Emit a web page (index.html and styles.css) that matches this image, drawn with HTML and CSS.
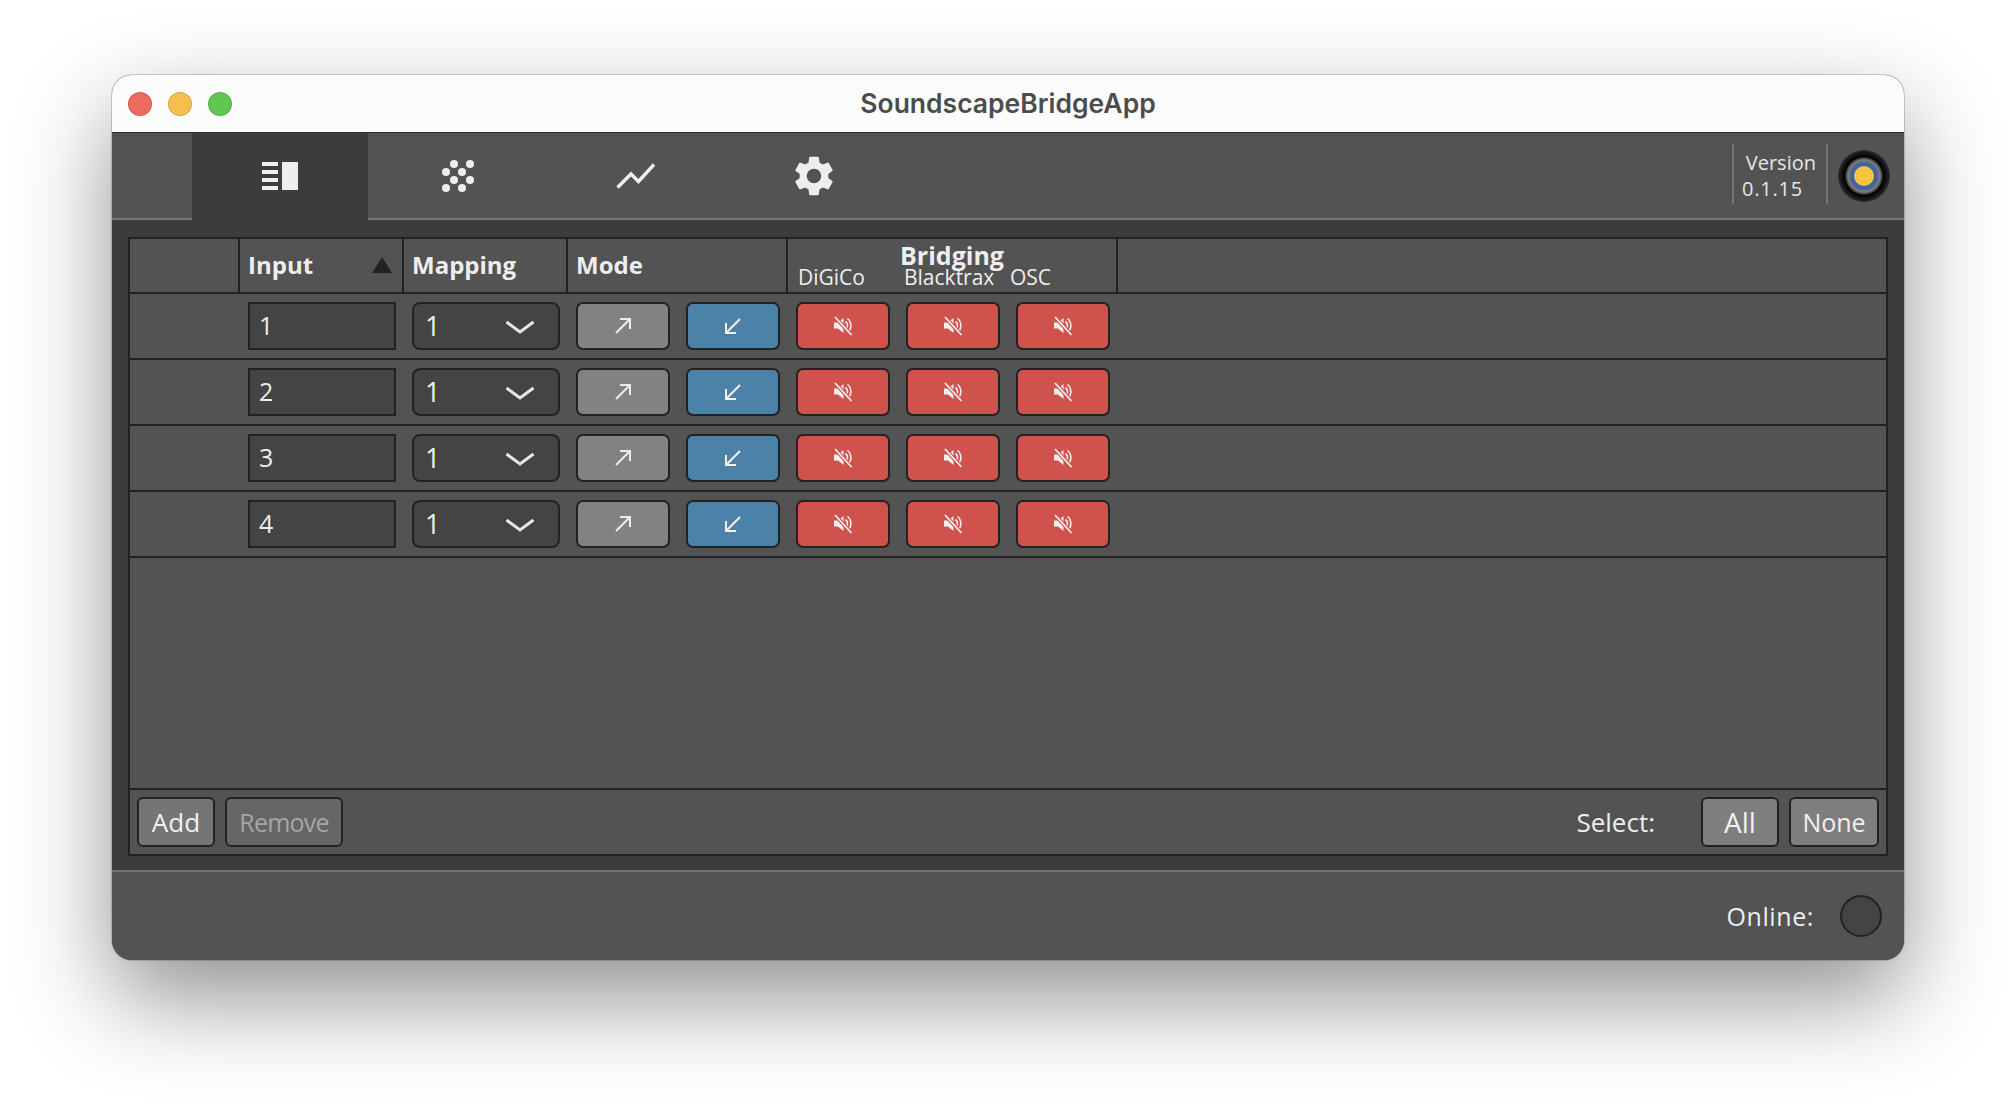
FILE: index.html
```html
<!DOCTYPE html>
<html lang="en">
<head>
<meta charset="utf-8">
<title>SoundscapeBridgeApp</title>
<link rel="stylesheet" href="styles.css">
</head>
<body>
<svg class="defs" width="0" height="0" aria-hidden="true">
  <defs>
    <symbol id="mute" viewBox="0 0 20 20">
      <path d="M1 6.5h4L10.5 2v15L5 12.5H1z" fill="#f0f0f0"/>
      <path d="M12.5 5.5a5 5 0 0 1 0 8M14.5 2.5a9 9 0 0 1 0 14" fill="none" stroke="#f0f0f0" stroke-width="1.6"/>
      <path d="M2.5 1.5 18 18.5" stroke="#cf524d" stroke-width="4"/>
      <path d="M2 1 18.5 19" stroke="#f0f0f0" stroke-width="1.8"/>
    </symbol>
    <symbol id="ne" viewBox="0 0 18 18">
      <path d="M2 16 16 2M6 2h10v10" fill="none" stroke="#ececec" stroke-width="2"/>
    </symbol>
    <symbol id="sw" viewBox="0 0 18 18">
      <path d="M16 2 2 16M12 16H2V6" fill="none" stroke="#f0f0f0" stroke-width="2"/>
    </symbol>
    <symbol id="chev" viewBox="0 0 32 18">
      <path d="M2.500 5 16 15 29.500 5" fill="none" stroke="#e8e8e8" stroke-width="3"/>
    </symbol>
  </defs>
</svg>
<div class="window">
  <header class="titlebar">
    <div class="lights">
      <span class="light red"></span>
      <span class="light yellow"></span>
      <span class="light green"></span>
    </div>
    <div class="title">SoundscapeBridgeApp</div>
  </header>

  <nav class="toolbar">
    <div class="tab active">
      <svg width="36" height="28" viewBox="0 0 36 28"><path d="M0 0h16v4H0zM0 8h16v4H0zM0 16h16v4H0zM0 24h16v4H0zM20 0h16v28H20z" fill="#eee"/></svg>
    </div>
    <div class="tab">
      <svg width="32" height="32" viewBox="0 0 32 32" fill="#eee"><circle cx="12" cy="4" r="4"/><circle cx="28" cy="4" r="4"/><circle cx="4" cy="12" r="4"/><circle cx="20" cy="12" r="4"/><circle cx="12" cy="20" r="4"/><circle cx="28" cy="20" r="4"/><circle cx="4" cy="28" r="4"/><circle cx="20" cy="28" r="4"/></svg>
    </div>
    <div class="tab">
      <svg width="40" height="28" viewBox="0 0 40 28"><path d="M1.500 25.500 15 12l7.500 7.500L38 2.500" fill="none" stroke="#eee" stroke-width="3.400"/></svg>
    </div>
    <div class="tab">
      <svg width="48" height="48" viewBox="0 0 24 24"><path fill="#eee" d="M19.140 12.940c.04-.3.06-.61.06-.94 0-.32-.02-.64-.07-.94l2.030-1.580c.18-.14.23-.41.12-.61l-1.920-3.320c-.12-.22-.37-.29-.59-.22l-2.390.96c-.5-.38-1.030-.7-1.620-.94l-.36-2.540c-.04-.24-.24-.41-.48-.41h-3.840c-.24 0-.43.17-.47.41l-.36 2.540c-.59.24-1.130.57-1.620.94l-2.390-.96c-.22-.08-.47 0-.59.22L2.740 8.870c-.12.21-.08.47.12.61l2.030 1.580c-.05.3-.09.63-.09.94s.02.64.07.94l-2.030 1.580c-.18.14-.23.41-.12.61l1.920 3.320c.12.22.37.29.59.22l2.390-.96c.5.38 1.030.7 1.620.94l.36 2.540c.05.24.24.41.48.41h3.840c.24 0 .44-.17.47-.41l.36-2.540c.59-.24 1.130-.56 1.620-.94l2.390.96c.22.08.47 0 .59-.22l1.920-3.320c.12-.22.07-.47-.12-.61l-2.010-1.580zM12 15.600c-1.980 0-3.600-1.620-3.600-3.600s1.620-3.600 3.600-3.600 3.600 1.620 3.600 3.600-1.620 3.600-3.600 3.600z"/></svg>
    </div>
    <div class="toolbar-right">
      <div class="version">
        <div class="version-label">Version</div>
        <div class="version-number">0.1.15</div>
      </div>
      <div class="logo"><span class="logo-ring"><span class="logo-dot"></span></span></div>
    </div>
  </nav>

  <main class="content">
    <div class="table">
      <div class="row head">
        <div class="cell"></div>
        <div class="cell bold between"><span>Input</span><span class="sort"></span></div>
        <div class="cell bold">Mapping</div>
        <div class="cell bold">Mode</div>
        <div class="cell bridging">
          <div class="bridging-title">Bridging</div>
          <div class="bridging-subs"><span>DiGiCo</span><span>Blacktrax</span><span>OSC</span></div>
        </div>
        <div class="cell last"></div>
      </div>

      <div class="row">
        <div></div>
        <div class="slot"><div class="field">1</div></div>
        <div class="slot"><div class="combo"><span>1</span><svg width="32" height="18"><use href="#chev"/></svg></div></div>
        <div class="slot pair">
          <div class="btn gray"><svg width="18" height="18"><use href="#ne"/></svg></div>
          <div class="btn blue"><svg width="18" height="18"><use href="#sw"/></svg></div>
        </div>
        <div class="slot triple">
          <div class="btn redb"><svg width="20" height="20"><use href="#mute"/></svg></div>
          <div class="btn redb"><svg width="20" height="20"><use href="#mute"/></svg></div>
          <div class="btn redb"><svg width="20" height="20"><use href="#mute"/></svg></div>
        </div>
        <div></div>
      </div>

      <div class="row">
        <div></div>
        <div class="slot"><div class="field">2</div></div>
        <div class="slot"><div class="combo"><span>1</span><svg width="32" height="18"><use href="#chev"/></svg></div></div>
        <div class="slot pair">
          <div class="btn gray"><svg width="18" height="18"><use href="#ne"/></svg></div>
          <div class="btn blue"><svg width="18" height="18"><use href="#sw"/></svg></div>
        </div>
        <div class="slot triple">
          <div class="btn redb"><svg width="20" height="20"><use href="#mute"/></svg></div>
          <div class="btn redb"><svg width="20" height="20"><use href="#mute"/></svg></div>
          <div class="btn redb"><svg width="20" height="20"><use href="#mute"/></svg></div>
        </div>
        <div></div>
      </div>

      <div class="row">
        <div></div>
        <div class="slot"><div class="field">3</div></div>
        <div class="slot"><div class="combo"><span>1</span><svg width="32" height="18"><use href="#chev"/></svg></div></div>
        <div class="slot pair">
          <div class="btn gray"><svg width="18" height="18"><use href="#ne"/></svg></div>
          <div class="btn blue"><svg width="18" height="18"><use href="#sw"/></svg></div>
        </div>
        <div class="slot triple">
          <div class="btn redb"><svg width="20" height="20"><use href="#mute"/></svg></div>
          <div class="btn redb"><svg width="20" height="20"><use href="#mute"/></svg></div>
          <div class="btn redb"><svg width="20" height="20"><use href="#mute"/></svg></div>
        </div>
        <div></div>
      </div>

      <div class="row">
        <div></div>
        <div class="slot"><div class="field">4</div></div>
        <div class="slot"><div class="combo"><span>1</span><svg width="32" height="18"><use href="#chev"/></svg></div></div>
        <div class="slot pair">
          <div class="btn gray"><svg width="18" height="18"><use href="#ne"/></svg></div>
          <div class="btn blue"><svg width="18" height="18"><use href="#sw"/></svg></div>
        </div>
        <div class="slot triple">
          <div class="btn redb"><svg width="20" height="20"><use href="#mute"/></svg></div>
          <div class="btn redb"><svg width="20" height="20"><use href="#mute"/></svg></div>
          <div class="btn redb"><svg width="20" height="20"><use href="#mute"/></svg></div>
        </div>
        <div></div>
      </div>

      <div class="empty"></div>

      <div class="table-foot">
        <div class="pill add">Add</div>
        <div class="pill remove">Remove</div>
        <div class="spacer"></div>
        <div class="select-label">Select:</div>
        <div class="pill all">All</div>
        <div class="pill none">None</div>
      </div>
    </div>
  </main>

  <footer class="statusbar">
    <span class="online-label">Online:</span>
    <span class="online-led"></span>
  </footer>
</div>
</body>
</html>
```

FILE: styles.css
```css
* { box-sizing: border-box; }

html, body { height: 100%; }

body {
  margin: 0;
  padding: 75px 112px 0;
  background: #ffffff;
  overflow: hidden;
  font-family: "Open Sans", "Noto Sans", sans-serif;
  color: #eeeeee;
}

.defs { position: absolute; }

.window {
  height: 885px;
  display: flex;
  flex-direction: column;
  border-radius: 20px;
  overflow: hidden;
  box-shadow: 0 0 0 1px rgba(0,0,0,.16), 0 38px 95px rgba(0,0,0,.44);
  background: #535353;
}

.titlebar {
  flex: 0 0 57px;
  background: #fcfcfc;
  display: flex;
  align-items: center;
  position: relative;
}

.lights {
  display: flex;
  gap: 16px;
  padding-left: 16px;
}

.light {
  width: 24px;
  height: 24px;
  border-radius: 50%;
  border: 1px solid rgba(0,0,0,.12);
}
.red { background: #ed6a5f; }
.yellow { background: #f5bf4f; }
.green { background: #61c554; }

.title {
  position: absolute;
  left: 0;
  right: 0;
  text-align: center;
  font-family: Inter, sans-serif;
  font-weight: 600;
  font-size: 26.500px;
  color: #4c4c4c;
  padding-bottom: 1px;
}

.toolbar {
  flex: 0 0 88px;
  display: flex;
  padding-left: 80px;
  background: #535353;
  border-top: 1px solid #2a2a2a;
  border-bottom: 2px solid #747474;
}

.tab {
  width: 178px;
  display: flex;
  align-items: center;
  justify-content: center;
  padding-left: 2px;
}

.tab.active {
  width: 176px;
  padding-left: 0;
  margin-bottom: -2px;
  background: #3c3c3c;
  padding-bottom: 2px;
}

.toolbar-right {
  margin-left: auto;
  display: flex;
  align-items: center;
  padding-right: 14px;
}

.version {
  width: 96px;
  height: 60px;
  margin-right: 10px;
  margin-bottom: 3px;
  padding-top: 4px;
  border-left: 2px solid #737373;
  border-right: 2px solid #737373;
  font-size: 20px;
  line-height: 26px;
  color: #e6e6e6;
  display: flex;
  flex-direction: column;
  justify-content: center;
}

.version-label { text-align: right; padding-right: 10px; }
.version-number { padding-left: 8px; letter-spacing: .8px; }

.logo {
  width: 52px;
  height: 52px;
  margin-top: 1px;
  border-radius: 50%;
  background: radial-gradient(closest-side, #000 72%, #141414 88%, #303030 100%);
  display: flex;
  align-items: center;
  justify-content: center;
}

.logo-ring {
  width: 38px;
  height: 38px;
  border-radius: 50%;
  background: radial-gradient(closest-side, #3f63a0 68%, #64708a 76%, #7c7c7c 84%, #4a4a4a 93%, #111 100%);
  display: flex;
  align-items: center;
  justify-content: center;
}

.logo-dot {
  width: 20px;
  height: 20px;
  border-radius: 50%;
  background: #f6c640;
}

.content {
  flex: 1;
  min-height: 0;
  background: #3c3c3c;
  padding: 17px 16px 14px 16px;
  display: flex;
}

.table {
  flex: 1;
  display: flex;
  flex-direction: column;
  border: 2px solid #222;
  background: #535353;
}

.row {
  flex: 0 0 66px;
  display: grid;
  grid-template-columns: 110px 164px 164px 220px 330px 1fr;
  border-bottom: 2px solid #222;
}

.row.head { flex-basis: 55px; }

.cell {
  border-right: 2px solid #222;
  display: flex;
  align-items: center;
  padding-left: 8px;
  font-size: 24px;
}
.cell.last { border-right: 0; }

.bold { font-weight: 700; padding-bottom: 2px; }

.between { justify-content: space-between; padding-right: 10px; }

.sort {
  width: 0;
  height: 0;
  border-left: 10px solid transparent;
  border-right: 10px solid transparent;
  border-bottom: 16px solid #222;
}

.bridging {
  flex-direction: column;
  align-items: stretch;
  justify-content: center;
  padding-left: 0;
  font-size: 21px;
}

.bridging-title {
  text-align: center;
  font-weight: 700;
  font-size: 25px;
  line-height: 22px;
}

.bridging-subs {
  display: grid;
  grid-template-columns: 106px 106px 1fr;
  padding-left: 10px;
  line-height: 22px;
}

.slot {
  display: flex;
  align-items: center;
  padding-left: 8px;
  padding-right: 8px;
}

.pair, .triple { gap: 16px; }

.field, .combo {
  width: 148px;
  height: 48px;
  background: #444;
  border: 2px solid #222;
  display: flex;
  align-items: center;
  font-size: 25px;
  color: #eee;
}

.field { padding-left: 9px; padding-bottom: 2px; }

.combo {
  border-radius: 8px;
  padding-left: 11px;
  padding-right: 22px;
  padding-bottom: 1px;
  justify-content: space-between;
  font-size: 27px;
}

.btn {
  width: 94px;
  height: 48px;
  border: 2px solid #222;
  border-radius: 7px;
  display: flex;
  align-items: center;
  justify-content: center;
}

.gray { background: #828282; }
.blue { background: #4c82a8; }
.redb { background: #cf524d; }

.empty { flex: 1; }

.table-foot {
  flex: 0 0 66px;
  border-top: 2px solid #222;
  display: flex;
  align-items: center;
  gap: 10px;
  padding: 0 7px;
}

.pill {
  height: 50px;
  border: 2px solid #222;
  border-radius: 6px;
  display: flex;
  align-items: center;
  justify-content: center;
  font-size: 26px;
  background: #7e7e7e;
  color: #f0f0f0;
}

.add { width: 78px; background: #757575; }
.remove { width: 118px; background: #656565; color: #a6a6a6; font-size: 25px; letter-spacing: -.8px; }
.all { width: 78px; font-size: 28px; }
.none { width: 90px; font-size: 25px; }

.spacer { flex: 1; }

.select-label {
  font-size: 26px;
  margin-right: 36px;
  color: #eeeeee;
}

.statusbar {
  flex: 0 0 90px;
  border-top: 2px solid #747474;
  display: flex;
  align-items: center;
  justify-content: flex-end;
  gap: 26px;
  padding-right: 22px;
  padding-bottom: 1px;
  background: #535353;
}

.online-label { font-size: 25px; letter-spacing: .6px; }

.online-led {
  width: 42px;
  height: 42px;
  border-radius: 50%;
  background: #444;
  border: 2px solid #222;
}
```
